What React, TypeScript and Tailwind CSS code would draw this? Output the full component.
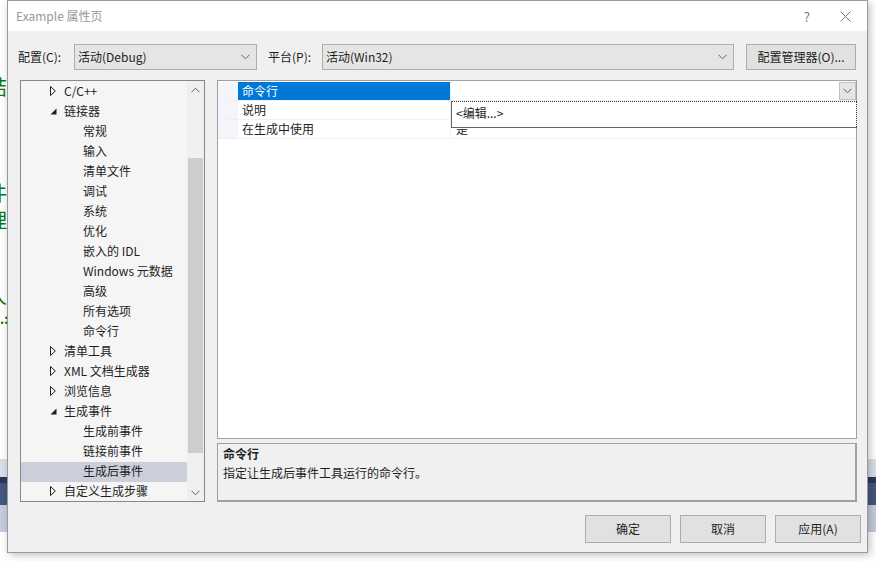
import React from 'react';

const font = { fontFamily: '"Noto Sans CJK SC", "Noto Sans", sans-serif' };

type TreeItem = { label: string; level: 0 | 1; state?: 'open' | 'closed'; selected?: boolean };

const treeItems: TreeItem[] = [
  { label: 'C/C++', level: 0, state: 'closed' },
  { label: '链接器', level: 0, state: 'open' },
  { label: '常规', level: 1 },
  { label: '输入', level: 1 },
  { label: '清单文件', level: 1 },
  { label: '调试', level: 1 },
  { label: '系统', level: 1 },
  { label: '优化', level: 1 },
  { label: '嵌入的 IDL', level: 1 },
  { label: 'Windows 元数据', level: 1 },
  { label: '高级', level: 1 },
  { label: '所有选项', level: 1 },
  { label: '命令行', level: 1 },
  { label: '清单工具', level: 0, state: 'closed' },
  { label: 'XML 文档生成器', level: 0, state: 'closed' },
  { label: '浏览信息', level: 0, state: 'closed' },
  { label: '生成事件', level: 0, state: 'open' },
  { label: '生成前事件', level: 1 },
  { label: '链接前事件', level: 1 },
  { label: '生成后事件', level: 1, selected: true },
  { label: '自定义生成步骤', level: 0, state: 'closed' },
];

const Chevron = ({ up = false }: { up?: boolean }) => (
  <svg width="9" height="6" viewBox="0 0 9 6" className={up ? 'rotate-180' : ''}>
    <path d="M0.5 0.8 L4.5 4.8 L8.5 0.8" fill="none" stroke="#606060" strokeWidth="1" />
  </svg>
);

const Arrow = ({ open }: { open: boolean }) =>
  open ? (
    <svg width="7" height="7" viewBox="0 0 7 7">
      <path d="M6.5 0.5 L6.5 6.5 L0.5 6.5 Z" fill="#1e1e1e" />
    </svg>
  ) : (
    <svg width="6" height="10" viewBox="0 0 6 10">
      <path d="M0.5 0.5 L5.3 5 L0.5 9.5 Z" fill="none" stroke="#1e1e1e" strokeWidth="1" />
    </svg>
  );

const Combo = ({ value, width }: { value: string; width: string }) => (
  <div className={`${width} h-[26px] flex items-center justify-between border border-[#adadad] bg-[#e5e5e5] pl-[3px] pr-[6px]`}>
    <span className="text-[12px] text-[#1e1e1e]">{value}</span>
    <Chevron />
  </div>
);

export default function App() {
  return (
    <div className="relative w-[876px] h-[561px] overflow-hidden bg-white" style={font}>
      {/* editor behind the dialog */}
      <div className="absolute left-[-13px] top-[75px] text-[20px] leading-[24px] text-[#0a7a0a]">结</div>
      <div className="absolute left-[-13px] top-[181px] text-[20px] leading-[24px] text-[#0a7a0a]">件</div>
      <div className="absolute left-[-13px] top-[208px] text-[20px] leading-[24px] text-[#0a7a0a]">理</div>
      <div className="absolute left-[-13px] top-[284px] text-[20px] leading-[24px] text-[#0a7a0a]">人</div>
      <div className="absolute left-[0px] top-[312px] text-[13px] leading-[14px] font-bold text-[#0a7a0a]">.:</div>
      <div className="absolute left-0 right-0 top-[459px] flex flex-col">
        <div className="h-[18px] bg-[#dadee8]" />
        <div className="h-[6px] bg-[#2a3858]" />
        <div className="h-[22px] bg-[#44557f]" />
        <div className="h-[27px] bg-[#c6ccdd]" />
      </div>

      {/* dialog */}
      <div className="absolute left-[7px] top-0 w-[861px] h-[553px] flex flex-col border border-[#9a9a9a] bg-[#f0f0f0] shadow-[2px_2px_8px_rgba(0,0,0,0.25)]">
        <div className="h-[30px] bg-white flex items-center justify-between pl-[8px] pr-[16px]">
          <span className="text-[12px] text-[#999999]">Example 属性页</span>
          <div className="flex items-center gap-[30px] text-[#777777]">
            <span className="text-[13px] leading-none">?</span>
            <svg width="11" height="11" viewBox="0 0 11 11">
              <path d="M0.5 0.5 L10.5 10.5 M10.5 0.5 L0.5 10.5" stroke="#777777" strokeWidth="1" />
            </svg>
          </div>
        </div>

        <div className="mt-[13px] h-[26px] flex items-center pl-[10px]">
          <span className="w-[56px] text-[12px] text-[#1e1e1e]">配置(C):</span>
          <Combo value="活动(Debug)" width="w-[183px]" />
          <span className="ml-[11px] w-[54px] text-[12px] text-[#1e1e1e]">平台(P):</span>
          <Combo value="活动(Win32)" width="w-[412px]" />
          <button className="ml-[12px] w-[110px] h-[26px] border border-[#adadad] bg-[#e1e1e1] text-[12px] text-[#1e1e1e]">
            配置管理器(O)...
          </button>
        </div>

        <div className="mt-[10px] h-[422px] flex pl-[12px] gap-[12px]">
          {/* tree */}
          <div className="w-[185px] h-full flex border border-[#828790] bg-[#f5f5f5]">
            <div className="flex-1 pt-[1px] overflow-hidden">
              {treeItems.map((it) => (
                <div
                  key={it.label}
                  className={`h-[20px] flex items-center pb-[2px] text-[12px] text-[#1e1e1e] whitespace-nowrap ${
                    it.level === 1 ? 'pl-[62px]' : 'pl-[29px]'
                  } ${it.selected ? 'bg-[#cccedb]' : ''}`}
                >
                  {it.level === 0 && (
                    <span className="w-[14px] flex items-center">
                      <Arrow open={it.state === 'open'} />
                    </span>
                  )}
                  {it.label}
                </div>
              ))}
            </div>
            <div className="w-[17px] h-full flex flex-col bg-[#f0f0f0]">
              <div className="h-[17px] flex items-center justify-center">
                <Chevron up />
              </div>
              <div className="flex-1 px-[1px]">
                <div className="mt-[60px] h-[295px] bg-[#cdcdcd]" />
              </div>
              <div className="h-[17px] flex items-center justify-center">
                <Chevron />
              </div>
            </div>
          </div>

          {/* property grid + description */}
          <div className="w-[640px] h-full flex flex-col gap-[4px]">
            <div className="relative h-[359px] border border-[#a0a0a0] bg-white pt-[1px]">
              <div className="flex flex-col">
                {[
                  { name: '命令行', value: '', active: true },
                  { name: '说明', value: '' },
                  { name: '在生成中使用', value: '是' },
                ].map((r) => (
                  <div key={r.name} className="h-[19px] flex border-b border-[#f0f0f0] text-[12px]">
                    <div className="w-[20px] bg-[#f3f5fa]" />
                    <div
                      className={`w-[213px] flex items-center pl-[4px] border-r border-[#f0f0f0] ${
                        r.active ? 'bg-[#0078d7] text-white' : 'text-[#1e1e1e]'
                      }`}
                    >
                      {r.name}
                    </div>
                    <div className="flex-1 flex items-center justify-between pl-[5px] text-[#1e1e1e]">
                      <span className="leading-[14px]">{r.value}</span>
                      {r.active && (
                        <div className="w-[17px] h-[18px] flex items-center justify-center border border-[#c0c0c0] bg-[#e5e5e5]">
                          <Chevron />
                        </div>
                      )}
                    </div>
                  </div>
                ))}
              </div>
              {/* dropdown popup */}
              <div className="absolute left-[233px] top-[20px] w-[406px] h-[27px] bg-white border-l border-b border-[#646464] flex items-center pl-[4px] pb-[3px] text-[12px] text-[#1e1e1e]">
                <div className="absolute left-0 top-0 right-0 bottom-0 border-t border-r border-dotted border-[#303030]" />
                &lt;编辑...&gt;
              </div>
            </div>
            <div className="h-[59px] border border-[#a0a0a0] border-b-2 border-r-2 bg-[#f0f0f0] px-[5px] text-[12px] text-[#1e1e1e] leading-[19px]">
              <div className="font-bold">命令行</div>
              <div>指定让生成后事件工具运行的命令行。</div>
            </div>
          </div>
        </div>

        <div className="mt-[13px] h-[28px] flex justify-end gap-[9px] pr-[6px]">
          {['确定', '取消', '应用(A)'].map((b) => (
            <button key={b} className="w-[86px] h-[28px] border border-[#adadad] bg-[#e1e1e1] text-[12px] text-[#1e1e1e]">
              {b}
            </button>
          ))}
        </div>
      </div>
    </div>
  );
}
